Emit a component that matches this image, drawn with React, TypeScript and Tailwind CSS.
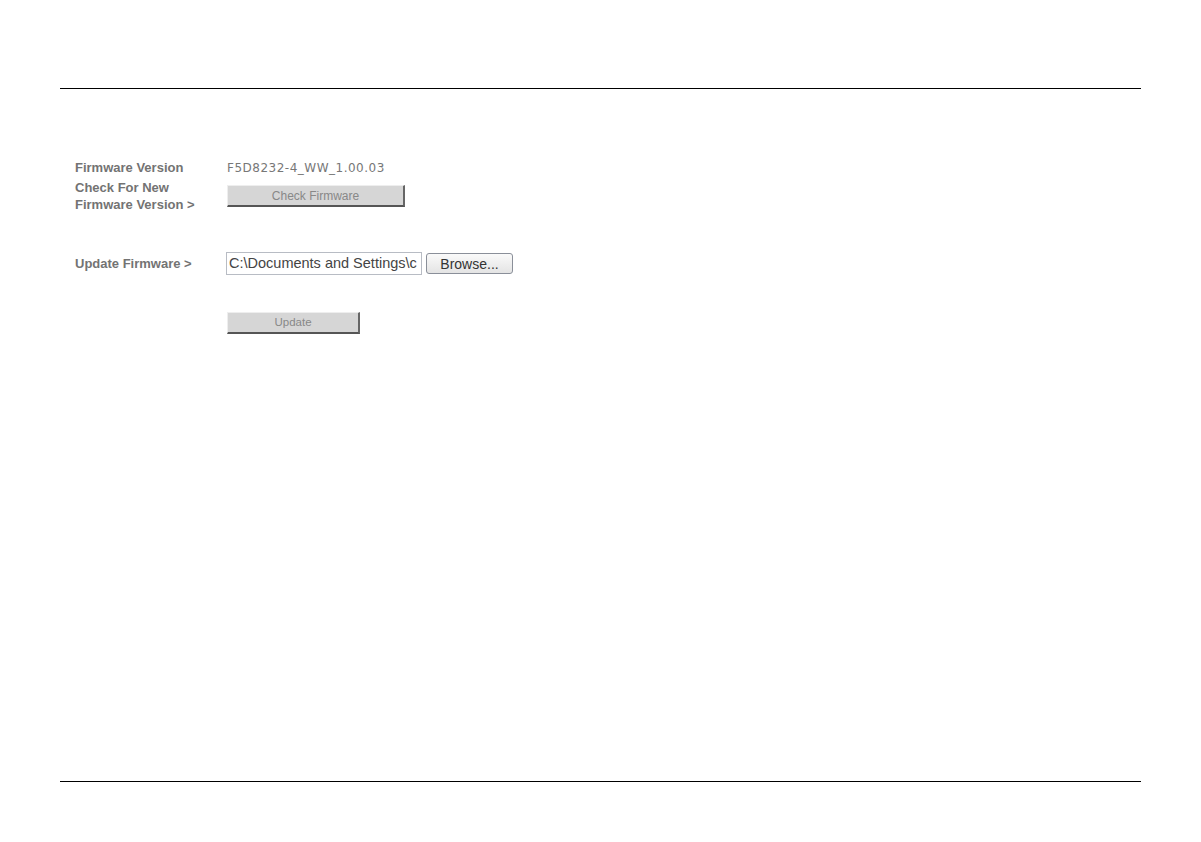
export default function App() {
  return (
    <div className="h-[842px] w-[1201px] bg-white px-[60px] pt-[88px] font-['Liberation_Sans',Arial,sans-serif]">
      <div className="flex h-[694px] flex-col justify-between border-y border-black">
        <div className="pl-[15px] pt-[71px]">
          {/* Firmware version */}
          <div className="flex h-[16px] items-center">
            <div className="w-[152px] text-[13px] font-bold text-[#737373]">Firmware Version</div>
            <div className="font-['DejaVu_Sans',sans-serif] text-[12px] tracking-[0.5px] text-[#777]">F5D8232-4_WW_1.00.03</div>
          </div>

          {/* Check for new */}
          <div className="mt-[3px] flex items-center">
            <div className="w-[152px] text-[13px] font-bold leading-[17px] text-[#737373]">
              Check For New
              <br />
              Firmware Version &gt;
            </div>
            <button className="h-[22px] w-[178px] border border-b-2 border-r-2 border-t-[#eee] border-l-[#eee] border-b-[#555] border-r-[#666] bg-[#d6d6d6] text-[12px] text-[#888]">
              Check Firmware
            </button>
          </div>

          {/* Update firmware */}
          <div className="mt-[39px] flex h-[23px] items-center">
            <div className="w-[151px] text-[13px] font-bold text-[#737373]">Update Firmware &gt;</div>
            <div className="flex h-[23px] w-[196px] items-center overflow-hidden whitespace-nowrap border border-[#b8bcc4] bg-white pl-[2px] text-[14.5px] text-[#444]">
              C:\Documents and Settings\c
            </div>
            <button className="ml-[4px] h-[21px] w-[87px] rounded-[3px] border border-[#8a8f99] bg-gradient-to-b from-[#fafafa] to-[#e4e4e4] text-[14px] text-[#333]">
              Browse...
            </button>
          </div>

          {/* Update button */}
          <div className="mt-[34px] pl-[152px]">
            <button className="h-[22px] w-[133px] border border-b-2 border-r-2 border-t-[#eee] border-l-[#eee] border-b-[#555] border-r-[#666] bg-[#d6d6d6] text-[11.5px] text-[#888]">
              Update
            </button>
          </div>
        </div>
      </div>
    </div>
  );
}
